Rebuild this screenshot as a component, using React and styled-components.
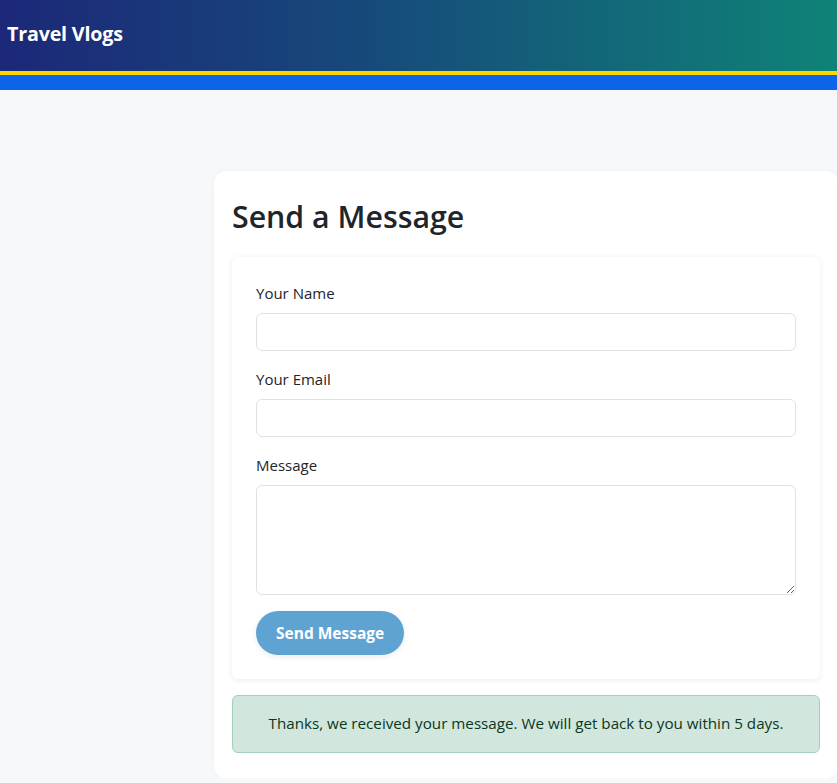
import React from "react";
import styled, { createGlobalStyle } from "styled-components";

const GlobalStyle = createGlobalStyle`
    body {
        margin: 0;
        background-color: #f7f8fa;
        font-family: "Open Sans", "Noto Sans", sans-serif;
        color: #212529;
        overflow: hidden;
    }
`;

function App() {
    return (
        <>
            <GlobalStyle />
            <Header>
                <Brand>Travel Vlogs</Brand>
            </Header>
            <Stripe />
            <Main>
                <Card>
                    <Titulo>Send a Message</Titulo>
                    <FormCard>
                        <Campo>
                            <Rotulo>Your Name</Rotulo>
                            <Entrada type="text" />
                        </Campo>
                        <Campo>
                            <Rotulo>Your Email</Rotulo>
                            <Entrada type="email" />
                        </Campo>
                        <Campo>
                            <Rotulo>Message</Rotulo>
                            <AreaTexto />
                        </Campo>
                        <Botao type="button">Send Message</Botao>
                    </FormCard>
                    <Alerta>
                        Thanks, we received your message. We will get back to you within 5 days.
                    </Alerta>
                </Card>
            </Main>
        </>
    );
}

const Header = styled.header`
    height: 67px;
    display: flex;
    align-items: center;
    padding: 0 7px 4px;
    background: linear-gradient(90deg, #1c2878 0%, #17467b 40%, #0f8377 100%);
    border-bottom: 4px solid #ffd500;
`;

const Brand = styled.div`
    font-size: 19.7px;
    font-weight: 700;
    color: #ffffff;
    letter-spacing: -0.01em;
`;

const Stripe = styled.div`
    height: 15px;
    background-color: #0c64e8;
`;

const Main = styled.main`
    padding: 81px 0 0 214px;
`;

const Card = styled.section`
    width: 588px;
    background-color: #ffffff;
    border-radius: 12px;
    padding: 18px 18px 25px;
    box-shadow: 0 0 10px -4px rgba(0, 0, 0, 0.1);
`;

const Titulo = styled.h2`
    margin: 8px 0 20px;
    font-size: 30.3px;
    font-weight: 600;
    line-height: 40px;
    color: #212529;
`;

const FormCard = styled.form`
    background-color: #ffffff;
    border-radius: 6px;
    padding: 25px 24px 24px;
    box-shadow: 0 1px 6px rgba(0, 0, 0, 0.08);
    display: flex;
    flex-direction: column;
`;

const Campo = styled.div`
    display: flex;
    flex-direction: column;
    margin-bottom: 17px;

    &:last-of-type {
        margin-bottom: 16px;
    }
`;

const Rotulo = styled.label`
    font-size: 15px;
    line-height: 22px;
    margin-bottom: 9px;
    color: #212529;
`;

const Entrada = styled.input`
    height: 38px;
    box-sizing: border-box;
    border: 1px solid #dee2e6;
    border-radius: 6px;
    padding: 6px 12px;
    font-size: 15px;
    background-color: #ffffff;
`;

const AreaTexto = styled.textarea`
    height: 110px;
    box-sizing: border-box;
    border: 1px solid #dee2e6;
    border-radius: 6px;
    padding: 6px 12px;
    font-family: inherit;
    resize: vertical;
`;

const Botao = styled.button`
    align-self: flex-start;
    height: 44px;
    padding: 0 20px;
    border: none;
    border-radius: 22px;
    background-color: #5fa3d3;
    color: #ffffff;
    font-family: inherit;
    font-size: 15.5px;
    font-weight: 700;
    box-shadow: 0 2px 6px rgba(0, 0, 0, 0.08);
    cursor: pointer;
`;

const Alerta = styled.div`
    margin-top: 16px;
    background-color: #d1e7dd;
    border: 1px solid #a3cfbb;
    border-radius: 6px;
    padding: 16px 16px 17px;
    text-align: center;
    font-size: 15.2px;
    line-height: 23px;
    color: #0a3622;
`;

export default App;
